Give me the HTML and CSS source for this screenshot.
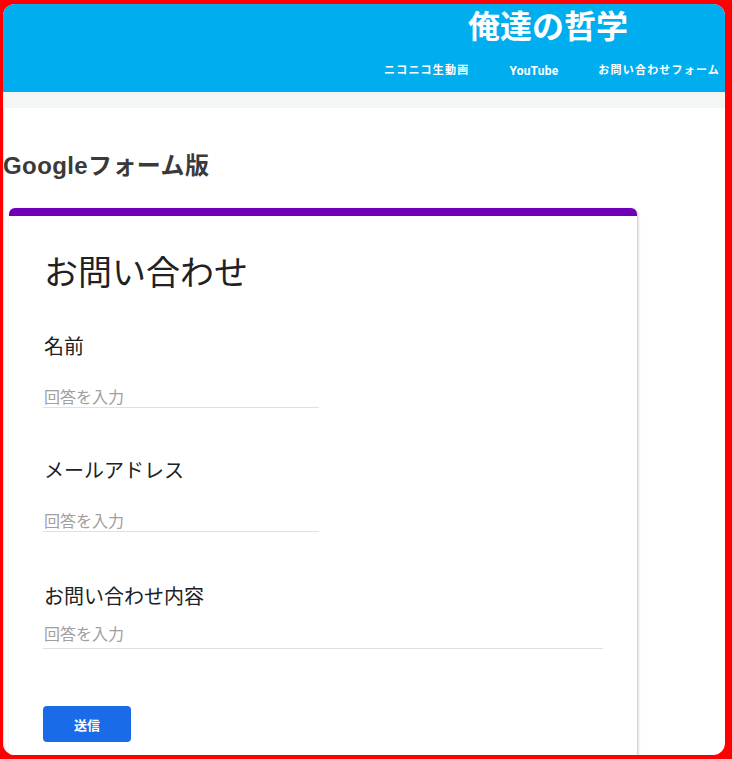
FILE: index.html
```html
<!DOCTYPE html>
<html lang="ja">
<head>
<meta charset="utf-8">
<title>俺達の哲学</title>
<link rel="stylesheet" href="styles.css">
</head>
<body>
<div class="frame">
  <header class="site-header">
    <h1 class="site-title">俺達の哲学</h1>
    <nav class="site-nav">
      <a class="nav-link" href="#">ニコニコ生動画</a>
      <a class="nav-link nav-latin" href="#">YouTube</a>
      <a class="nav-link" href="#">お問い合わせフォーム</a>
    </nav>
  </header>
  <div class="band"></div>
  <main class="content">
    <h2 class="page-heading">Googleフォーム版</h2>
    <section class="card">
      <div class="card-top"></div>
      <div class="card-body">
        <h3 class="form-title">お問い合わせ</h3>
        <div class="field field-1">
          <div class="label">名前</div>
          <div class="input short">回答を入力</div>
        </div>
        <div class="field field-2">
          <div class="label">メールアドレス</div>
          <div class="input short">回答を入力</div>
        </div>
        <div class="field field-3">
          <div class="label">お問い合わせ内容</div>
          <div class="input long">回答を入力</div>
        </div>
        <button class="submit" type="button">送信</button>
      </div>
    </section>
  </main>
</div>
</body>
</html>
```
FILE: styles.css
```css
* { box-sizing: border-box; }
html, body { margin: 0; padding: 0; }
body {
  background: #ff0000;
  width: 732px;
  height: 759px;
  overflow: hidden;
  font-family: "Noto Sans CJK JP", "Noto Sans", sans-serif;
}
.frame {
  margin: 4px 7px 4px 3px;
  height: 751px;
  border-radius: 12px;
  background: #ffffff;
  display: flex;
  flex-direction: column;
}
.site-header {
  background: #00aef0;
  height: 88px;
  border-radius: 12px 12px 0 0;
  display: flex;
  flex-direction: column;
  align-items: flex-end;
  padding-right: 5px;
}
.site-title {
  margin: 0 0 0 465px;
  align-self: flex-start;
  font-size: 32px;
  line-height: 40px;
  font-weight: 700;
  color: #ffffff;
}
.site-nav {
  display: flex;
  gap: 40px;
  margin-top: 19px;
}
.nav-link {
  color: #ffffff;
  text-decoration: none;
  font-family: "Roboto", "Noto Sans CJK JP", sans-serif;
  font-size: 11px;
  font-weight: 700;
  letter-spacing: 1.2px;
  line-height: 16px;
}
.nav-latin { letter-spacing: 0.2px; font-size: 12px; }
.band {
  height: 16px;
  background: #f4f5f5;
}
.content {
  flex: 1;
  overflow: hidden;
  border-radius: 0 0 12px 12px;
  padding: 0;
  border-left: 1px solid #e4e4e4;
}
.page-heading {
  margin: 0 0 0 -1px;
  padding-top: 42px;
  font-size: 24px;
  line-height: 32px;
  font-weight: 700;
  letter-spacing: 0.4px;
  color: #3a3a3a;
  font-family: "Liberation Sans", "Noto Sans CJK JP", sans-serif;
}
.card {
  margin: 26px 0 0 5px;
  width: 628px;
  background: #ffffff;
  border-radius: 6px 6px 0 0;
  box-shadow: 1px 1px 3px rgba(0,0,0,0.25);
}
.card-top {
  height: 8px;
  background: #6e00b8;
  border-radius: 6px 6px 0 0;
}
.card-body {
  padding: 31px 34px 20px 34px;
}
.form-title {
  margin: 0 0 0 1px;
  font-size: 34px;
  line-height: 48px;
  font-weight: 400;
  color: #202124;
}
.label {
  font-size: 20px;
  line-height: 28px;
  color: #202124;
  margin-left: 1px;
}
.input {
  margin-top: 25px;
  font-size: 16px;
  line-height: 22px;
  color: #a0a0a0;
  border-bottom: 1px solid #e0e0e0;
  padding: 0 0 0 1px;
}
.field-1 { margin-top: 37px; }
.field-2 { margin-top: 48px; }
.field-3 { margin-top: 50px; }
.short { width: 276px; }
.long { width: 560px; margin-top: 12px; padding-bottom: 4px; }
.submit {
  display: block;
  margin-top: 57px;
  width: 88px;
  height: 36px;
  border: none;
  border-radius: 4px;
  background: #1a6be8;
  color: #ffffff;
  font-family: "Noto Sans CJK JP", sans-serif;
  font-size: 13px;
  font-weight: 700;
  padding: 0;
}
```
